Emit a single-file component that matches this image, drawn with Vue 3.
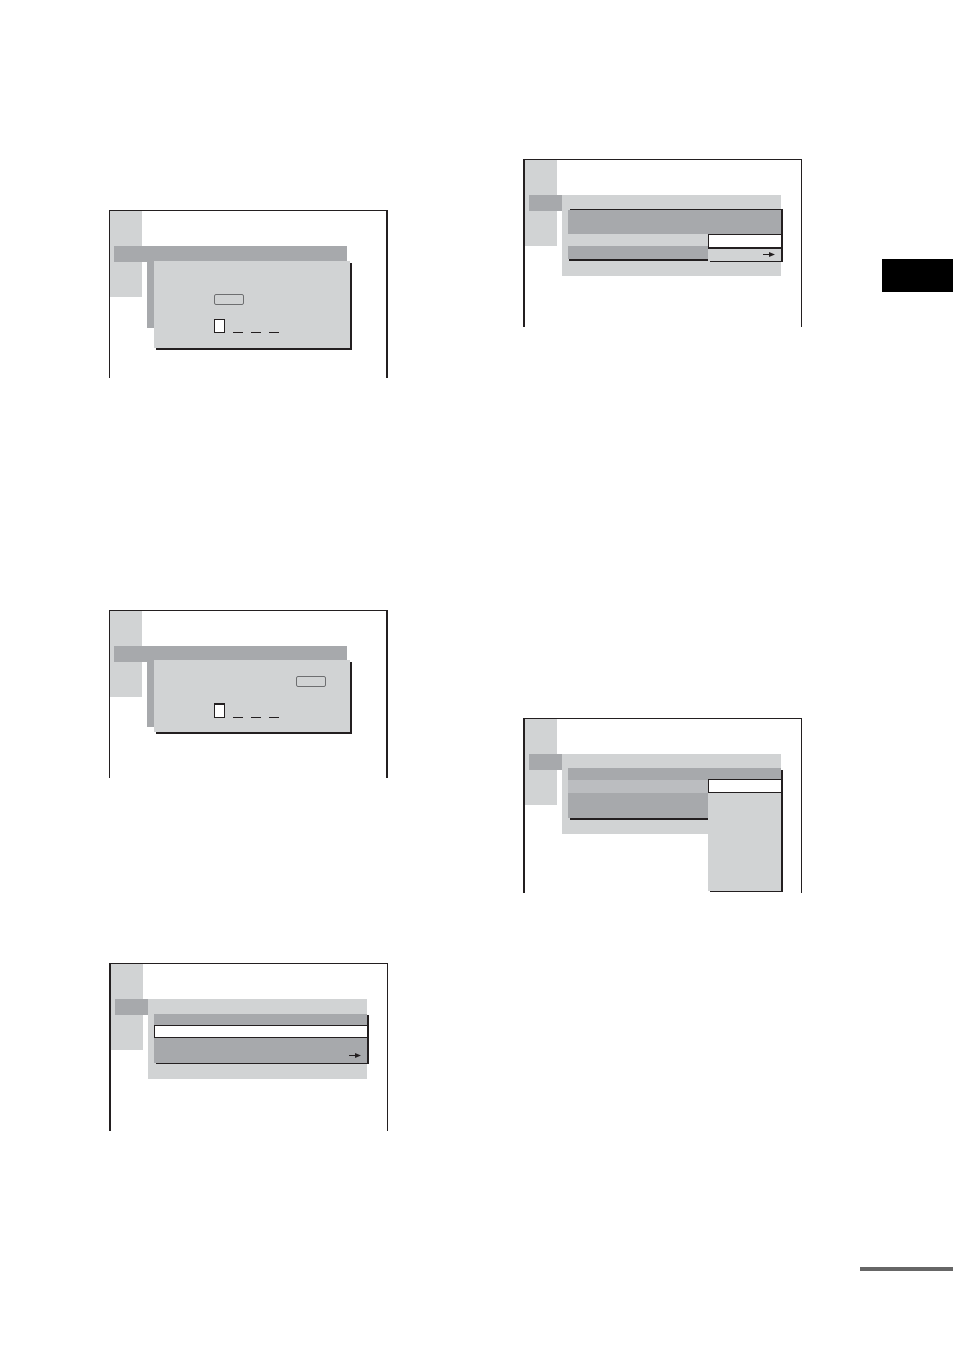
<template>
  <div class="page">
    <main class="columns">
      <section class="column column-left">
        <div v-for="screen in pinScreens" :key="screen.id" class="screen" :class="screen.id">
          <div class="sidebar"></div>
          <div class="menu">
            <div class="tab"></div>
            <div class="backdrop dark">
              <form class="dialog" @submit.prevent>
                <button class="key" type="submit" aria-label="Enter"></button>
                <div class="pin">
                  <input
                    v-for="n in 4"
                    :key="n"
                    v-model="screen.pin[n - 1]"
                    class="digit"
                    :class="{ active: n == 1 }"
                    type="text"
                    maxlength="1"
                    :aria-label="'Digit ' + n"
                  >
                </div>
              </form>
            </div>
          </div>
        </div>

        <div class="screen list-screen setup">
          <div class="sidebar"></div>
          <div class="menu">
            <div class="tab"></div>
            <div class="backdrop">
              <div class="list">
                <button class="row h11" aria-label="Item 1"></button>
                <button class="row h13 selected" aria-label="Item 2"></button>
                <button class="row h12" aria-label="Item 3"></button>
                <button class="row h13 more" aria-label="Item 4">
                  <svg class="arrow" viewBox="0 0 12 5"><path d="M0 2h6V0l6 2.5L6 5V3H0z" /></svg>
                </button>
              </div>
            </div>
          </div>
        </div>
      </section>

      <section class="column column-right">
        <div class="screen list-screen short-popup">
          <div class="sidebar"></div>
          <div class="menu">
            <div class="tab"></div>
            <div class="backdrop">
              <div class="list">
                <button class="row h12" aria-label="Item 1"></button>
                <button class="row h12" aria-label="Item 2"></button>
                <button class="row h12 light" aria-label="Item 3"></button>
                <button class="row h13" aria-label="Item 4"></button>
                <div class="popup">
                  <button class="row h15 selected" aria-label="Option 1"></button>
                  <button class="row h12 light more" aria-label="Option 2">
                    <svg class="arrow" viewBox="0 0 12 5"><path d="M0 2h6V0l6 2.5L6 5V3H0z" /></svg>
                  </button>
                </div>
              </div>
            </div>
          </div>
        </div>

        <div class="screen list-screen long-popup">
          <div class="sidebar"></div>
          <div class="menu">
            <div class="tab"></div>
            <div class="backdrop">
              <div class="list">
                <button class="row h12" aria-label="Item 1"></button>
                <button class="row h13 mid" aria-label="Item 2"></button>
                <button class="row h12" aria-label="Item 3"></button>
                <button class="row h13" aria-label="Item 4"></button>
                <div class="popup">
                  <button
                    v-for="n in 8"
                    :key="n"
                    class="row h14"
                    :class="n == 1 ? 'selected' : 'light'"
                    :aria-label="'Option ' + n"
                  ></button>
                </div>
              </div>
            </div>
          </div>
        </div>
      </section>

      <aside class="chapter"></aside>
    </main>

    <footer class="footer">
      <div class="rule"></div>
    </footer>
  </div>
</template>

<script setup>
import { reactive } from "vue"

const pinScreens = reactive([
  { id: "new-pin", pin: ["", "", "", ""] },
  { id: "confirm-pin", pin: ["", "", "", ""] },
])
</script>

<style>
body {
  margin: 0;
  background: #fff;
}
</style>

<style scoped>
.page {
  box-sizing: border-box;
  min-height: 100vh;
  padding-right: 1px;
  font-family: "Liberation Sans", Arial, sans-serif;
}

.columns {
  display: grid;
  grid-template-columns: 414fr 359fr 71px;
  align-items: start;
  padding-left: 109px;
}

.column {
  display: flex;
  flex-direction: column;
  align-items: flex-start;
}

.column-left {
  padding-top: 210px;
}

.column-right {
  padding-top: 159px;
  gap: 391px;
}

/* tv screen, open at the bottom */
.screen {
  box-sizing: border-box;
  display: grid;
  width: 279px;
  height: 168px;
  border: solid #231f20;
  border-width: 1px 2px 0 1px;
}

.list-screen {
  border-width: 1px 1px 0 2px;
}

.confirm-pin {
  margin-top: 232px;
}

.setup {
  margin-top: 185px;
}

.long-popup {
  height: 175px;
}

.sidebar,
.menu {
  grid-area: 1 / 1;
}

.sidebar {
  width: 32px;
  height: 86px;
  background: #d1d3d4;
}

.menu {
  display: flex;
  align-items: flex-start;
  padding: 35px 0 0 4px;
}

.tab {
  flex: none;
  width: 33px;
  height: 16px;
  background: #a7a9ac;
}

.backdrop {
  box-sizing: border-box;
  flex: none;
  width: 219px;
  height: 80px;
  padding: 15px 0 0 6px;
  background: #d1d3d4;
}

.backdrop.dark {
  width: 200px;
  height: 82px;
  padding-left: 7px;
  background: #a7a9ac;
}

/* pin dialog */
.dialog {
  box-sizing: border-box;
  display: flex;
  flex-direction: column;
  align-items: flex-start;
  gap: 14px;
  width: 196px;
  height: 87px;
  padding: 33px 0 0 60px;
  background: #d1d3d4;
  box-shadow: 2px 2px #231f20;
}

.confirm-pin .backdrop {
  height: 81px;
  padding-top: 14px;
}

.confirm-pin .dialog {
  gap: 16px;
  height: 72px;
  padding-top: 16px;
}

.confirm-pin .key {
  align-self: flex-end;
  margin-right: 24px;
}

.key {
  box-sizing: border-box;
  width: 30px;
  height: 11px;
  padding: 0;
  border: 1px solid #6d6e70;
  border-radius: 2px;
  background: transparent;
}

.pin {
  display: flex;
  align-items: flex-end;
  gap: 8px;
}

.digit {
  box-sizing: border-box;
  width: 10px;
  height: 14px;
  padding: 0;
  border: 0;
  border-bottom: 1px solid #231f20;
  border-radius: 0;
  background: transparent;
  font-size: 10px;
  text-align: center;
  outline: none;
}

.digit.active {
  width: 11px;
  border: 1px solid #231f20;
  background: #fff;
}

.confirm-pin .digit.active {
  height: 15px;
  border-top-width: 2px;
}

/* option lists */
.list {
  position: relative;
  background: #a7a9ac;
  box-shadow: 2px 1px #231f20;
}

.row {
  box-sizing: border-box;
  display: flex;
  width: 100%;
  padding: 0;
  border: 0;
  border-radius: 0;
  background: #a7a9ac;
}

.h11 { height: 11px; }
.h12 { height: 12px; }
.h13 { height: 13px; }
.h14 { height: 14px; }
.h15 { height: 15px; }

.row.light {
  background: #d1d3d4;
}

.row.mid {
  background: #bbbdc0;
}

.row.selected {
  border: solid #231f20;
  border-width: 1px 0 1px 1px;
  background: #fff;
}

.row.more {
  align-items: flex-start;
  justify-content: flex-end;
  padding: 3px 6px 0 0;
}

.arrow {
  width: 12px;
  height: 5px;
  fill: #231f20;
}

.popup {
  position: absolute;
  right: 0;
  width: 73px;
  box-shadow: 2px 1px #231f20;
}

.short-popup .backdrop {
  height: 81px;
}

.short-popup .list {
  box-shadow: 2px -1px #231f20, 1px 2px #231f20;
}

.short-popup .popup {
  top: 24px;
}

.short-popup .selected {
  border-bottom-width: 2px;
}

.long-popup .backdrop {
  padding-top: 14px;
}

.long-popup .list {
  box-shadow: 2px 2px #231f20;
}

.long-popup .popup {
  top: 11px;
}

/* page marks on the right edge */
.chapter {
  height: 33px;
  margin-top: 259px;
  background: #000;
}

.footer {
  display: flex;
  justify-content: flex-end;
  padding: 136px 0 80px;
}

.rule {
  width: 93px;
  height: 4px;
  background: #666;
}
</style>
